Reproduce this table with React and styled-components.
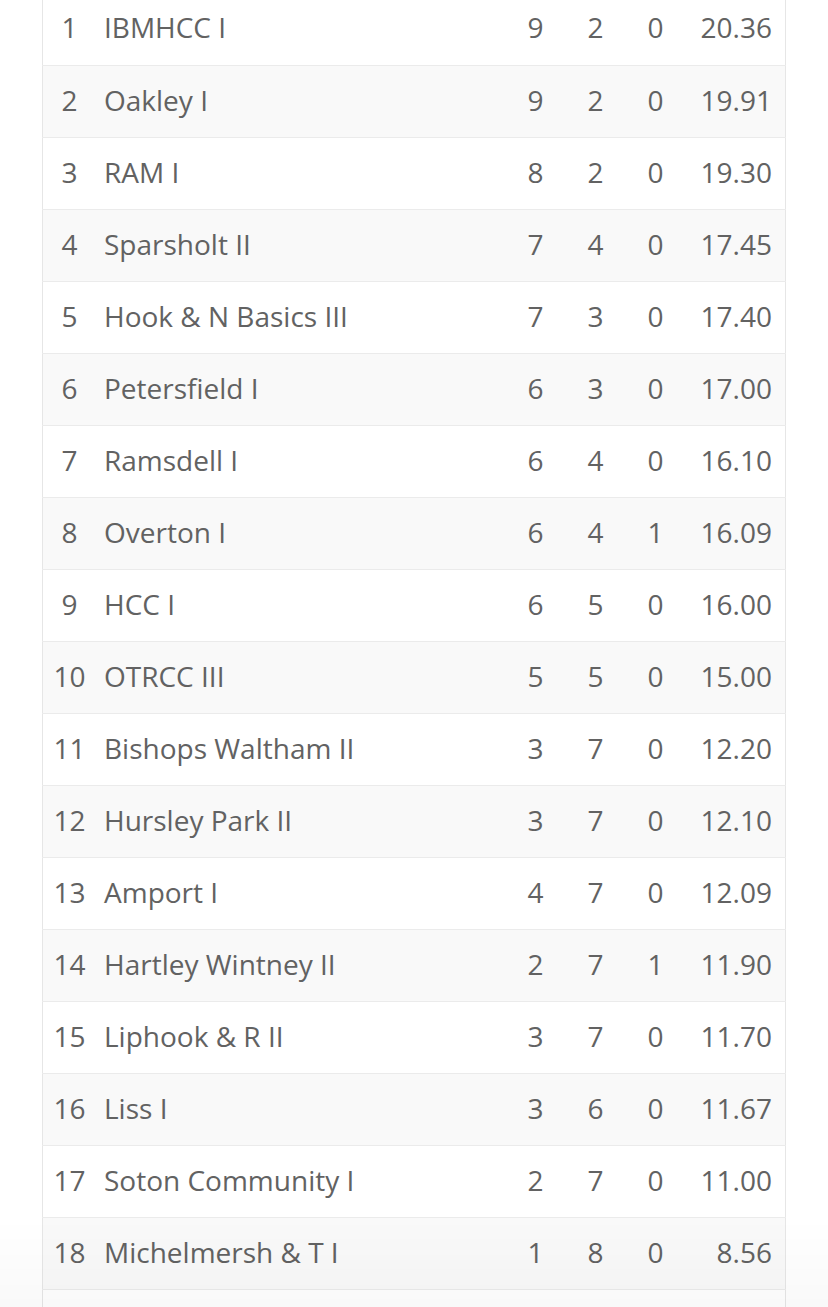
import React from "react";
import styled, { createGlobalStyle } from "styled-components";

const GlobalStyle = createGlobalStyle`
  html, body {
    margin: 0;
    padding: 0;
    background: #ffffff;
    overflow: hidden;
  }
  body {
    font-family: "Open Sans", "Noto Sans", Arial, sans-serif;
  }
`;

const Page = styled.div`
  width: 828px;
  height: 1307px;
  overflow: hidden;
  padding-left: 42px;
  box-sizing: border-box;
`;

const Table = styled.table`
  width: 744px;
  margin-top: -7px;
  border-collapse: collapse;
  border-left: 1px solid #e6e6e6;
  border-right: 1px solid #e6e6e6;
  table-layout: fixed;
  color: #626262;
  font-size: 28px;
  line-height: 1;

  td {
    padding-bottom: 3px;
  }
`;

const Row = styled.tr`
  height: 72px;
  background: ${(p) => (p.$shaded ? "#f9f9f9" : "#ffffff")};
  border-bottom: 1px solid #ebebeb;
`;

const Pos = styled.td`
  width: 53px;
  padding: 0;
  text-align: center;
`;

const Team = styled.td`
  padding: 0 0 0 8px;
  text-align: left;
  white-space: nowrap;
`;

const Num = styled.td`
  width: 60px;
  padding: 0;
  text-align: center;
`;

const Pts = styled.td`
  width: 100px;
  padding: 0 13px 0 0;
  box-sizing: border-box;
  text-align: right;
`;

const Fade = styled.div`
  position: fixed;
  left: 0;
  right: 0;
  bottom: 0;
  height: 90px;
  pointer-events: none;
  background: linear-gradient(to bottom, rgba(0, 0, 0, 0), rgba(0, 0, 0, 0.025));
`;

const teams = [
  [1, "IBMHCC I", 9, 2, 0, "20.36"],
  [2, "Oakley I", 9, 2, 0, "19.91"],
  [3, "RAM I", 8, 2, 0, "19.30"],
  [4, "Sparsholt II", 7, 4, 0, "17.45"],
  [5, "Hook & N Basics III", 7, 3, 0, "17.40"],
  [6, "Petersfield I", 6, 3, 0, "17.00"],
  [7, "Ramsdell I", 6, 4, 0, "16.10"],
  [8, "Overton I", 6, 4, 1, "16.09"],
  [9, "HCC I", 6, 5, 0, "16.00"],
  [10, "OTRCC III", 5, 5, 0, "15.00"],
  [11, "Bishops Waltham II", 3, 7, 0, "12.20"],
  [12, "Hursley Park II", 3, 7, 0, "12.10"],
  [13, "Amport I", 4, 7, 0, "12.09"],
  [14, "Hartley Wintney II", 2, 7, 1, "11.90"],
  [15, "Liphook & R II", 3, 7, 0, "11.70"],
  [16, "Liss I", 3, 6, 0, "11.67"],
  [17, "Soton Community I", 2, 7, 0, "11.00"],
  [18, "Michelmersh & T I", 1, 8, 0, "8.56"],
  [19, "", "", "", "", ""],
];

const App = () => {
  return (
    <Page>
      <GlobalStyle />
      <Table>
        <tbody>
          {teams.map(([pos, name, w, l, d, pts]) => (
            <Row key={pos} $shaded={pos % 2 === 0}>
              <Pos>{name ? pos : ""}</Pos>
              <Team>{name}</Team>
              <Num>{w}</Num>
              <Num>{l}</Num>
              <Num>{d}</Num>
              <Pts>{pts}</Pts>
            </Row>
          ))}
        </tbody>
      </Table>
      <Fade />
    </Page>
  );
};

export default App;
